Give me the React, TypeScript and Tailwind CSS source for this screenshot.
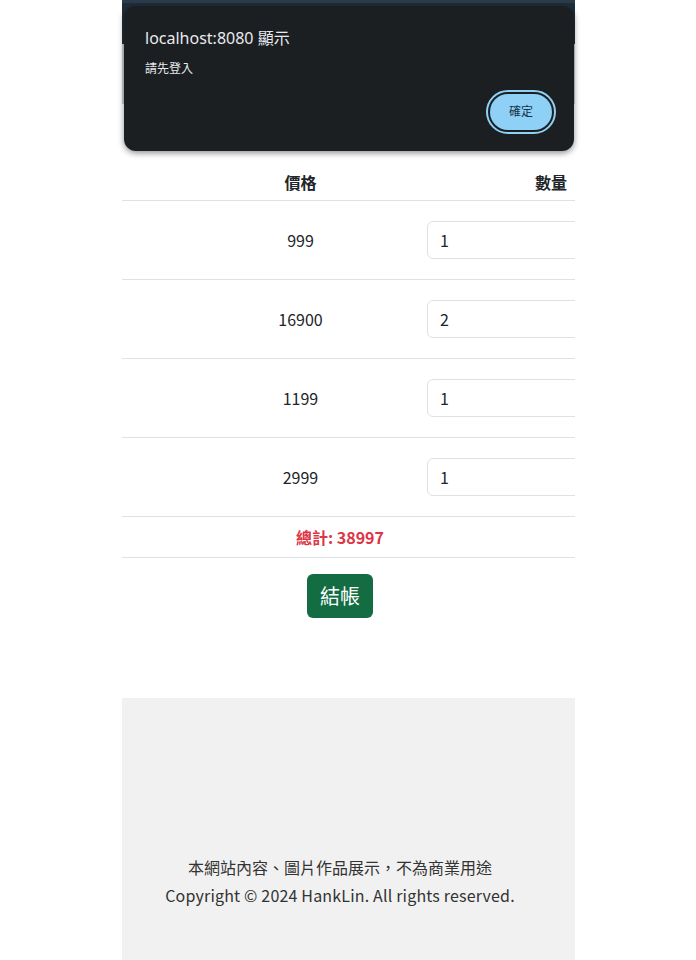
import React from "react";

const rows = [
  { price: "999", qty: "1" },
  { price: "16900", qty: "2" },
  { price: "1199", qty: "1" },
  { price: "2999", qty: "1" },
];

export default function App() {
  return (
    <div
      className="relative min-h-[960px] bg-white text-[#212529]"
      style={{ fontFamily: '"Noto Sans CJK TC", "Noto Sans", sans-serif' }}
    >
      <div className="ml-[122px] w-[453px] overflow-hidden">
        {/* navbar */}
        <div className="h-[44px] bg-[#1f2d3a] border-t-[3px] border-[#2a3b4a]" />
        <div className="h-[60px] border-l-2 border-r-2 border-[#cfcfcf] bg-white" />
        <div className="h-[59px]" />
        {/* table */}
        <div className="flex h-[38px] items-center border-b border-[#dee2e6] font-bold text-[16px]">
          <div className="w-[60px] shrink-0" />
          <div className="w-[237px] shrink-0 text-center">價格</div>
          <div className="flex-1 pr-[8px] text-right">數量</div>
        </div>
        {rows.map((r, i) => (
          <div key={i} className="flex h-[79px] items-center border-b border-[#dee2e6] text-[16px]">
            <div className="w-[60px] shrink-0" />
            <div className="w-[237px] shrink-0 text-center">{r.price}</div>
            <div className="shrink-0 pl-[8px]">
              <div className="flex h-[38px] w-[200px] items-center rounded-[6px] border border-[#dee2e6] bg-white pl-[12px] text-[16px]">
                {r.qty}
              </div>
            </div>
          </div>
        ))}
        <div className="flex h-[41px] items-center justify-center border-b border-[#dee2e6] pr-[17px] text-[16px] font-bold text-[#dc3545]">
          總計: 38997
        </div>
        <div className="flex justify-center pr-[17px] pt-[16px]">
          <button className="flex h-[44px] w-[66px] items-center justify-center rounded-[6px] bg-[#146c43] text-[20px] text-white">
            結帳
          </button>
        </div>
        <div className="h-[80px]" />
        <footer className="h-[300px] bg-[#f1f1f1] pt-[155px] pr-[17px] text-center text-[16px] leading-[28px] text-[#333]">
          <div>本網站內容、圖片作品展示，不為商業用途</div>
          <div className="tracking-[0.18px]">Copyright © 2024 HankLin. All rights reserved.</div>
        </footer>
      </div>

      {/* alert dialog */}
      <div
        className="absolute left-[124px] top-[6px] h-[145px] w-[450px] rounded-[12px] bg-[#1b1f22] shadow-[0_2px_6px_rgba(0,0,0,0.45)]"
        style={{ fontFamily: '"Noto Sans", "Noto Sans CJK TC", sans-serif' }}
      >
        <div className="pl-[21px] pt-[20px] text-[16px] leading-[24px] text-[#e8eaed]">
          localhost:8080 顯示
        </div>
        <div className="pl-[21px] pt-[11px] text-[12px] leading-[16px] text-[#e8eaed]">請先登入</div>
        <div className="absolute left-[362px] top-[84px] flex h-[44px] w-[70px] items-center justify-center rounded-full border-2 border-[#8ed0f6] bg-[#1b1f22] p-[2px]">
          <div className="flex h-full w-full items-center justify-center rounded-full bg-[#8ed0f6] text-[12px] text-[#163447]">
            確定
          </div>
        </div>
      </div>
    </div>
  );
}
